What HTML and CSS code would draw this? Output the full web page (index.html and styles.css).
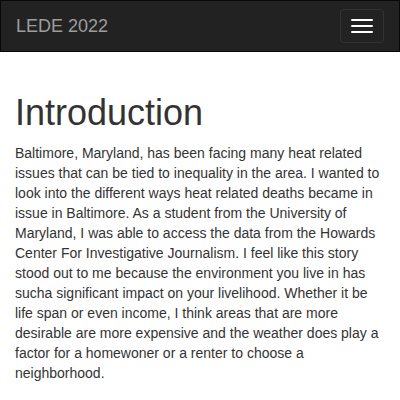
FILE: index.html
```html
<!DOCTYPE html>
<html>
<head>
<meta charset="utf-8">
<link rel="stylesheet" href="styles.css">
</head>
<body>
<nav class="navbar">
  <div class="navbar-header">
    <a class="brand" href="#">LEDE 2022</a>
    <button class="toggle" type="button" aria-label="Toggle navigation">
      <span class="bar"></span>
      <span class="bar"></span>
      <span class="bar"></span>
    </button>
  </div>
</nav>
<main class="container">
  <h1 class="title">Introduction</h1>
  <p class="intro">Baltimore, Maryland, has been facing many heat related issues that can be tied to inequality in the area. I wanted to look into the different ways heat related deaths became in issue in Baltimore. As a student from the University of Maryland, I was able to access the data from the Howards Center For Investigative Journalism. I feel like this story stood out to me because the environment you live in has sucha significant impact on your livelihood. Whether it be life span or even income, I think areas that are more desirable are more expensive and the weather does play a factor for a homewoner or a renter to choose a neighborhood.</p>
</main>
</body>
</html>
```
FILE: styles.css
```css
* { box-sizing: border-box; }
html, body { margin: 0; padding: 0; }
body {
  font-family: "Liberation Sans", Arial, Helvetica, sans-serif;
  font-size: 14px;
  line-height: 1.42857143;
  color: #333;
  background: #fff;
}
.navbar {
  background: #222;
  border: 1px solid #080808;
  min-height: 52px;
  margin-bottom: 20px;
}
.navbar-header {
  display: flex;
  justify-content: space-between;
  align-items: flex-start;
}
.brand {
  display: block;
  height: 50px;
  padding: 15px;
  font-size: 18px;
  line-height: 20px;
  color: #9d9d9d;
  text-decoration: none;
}
.toggle {
  display: flex;
  flex-direction: column;
  gap: 4px;
  margin: 8px 15px 8px 0;
  padding: 9px 10px;
  background: transparent;
  border: 1px solid #333;
  border-radius: 4px;
}
.bar {
  display: block;
  width: 22px;
  height: 2px;
  border-radius: 1px;
  background: #fff;
}
.container {
  padding: 1px 15px 0;
}
.title {
  font-size: 36px;
  font-weight: 500;
  line-height: 1.1;
  margin: 20px 0 10px;
}
.intro {
  margin: 0 0 10px;
}
```
